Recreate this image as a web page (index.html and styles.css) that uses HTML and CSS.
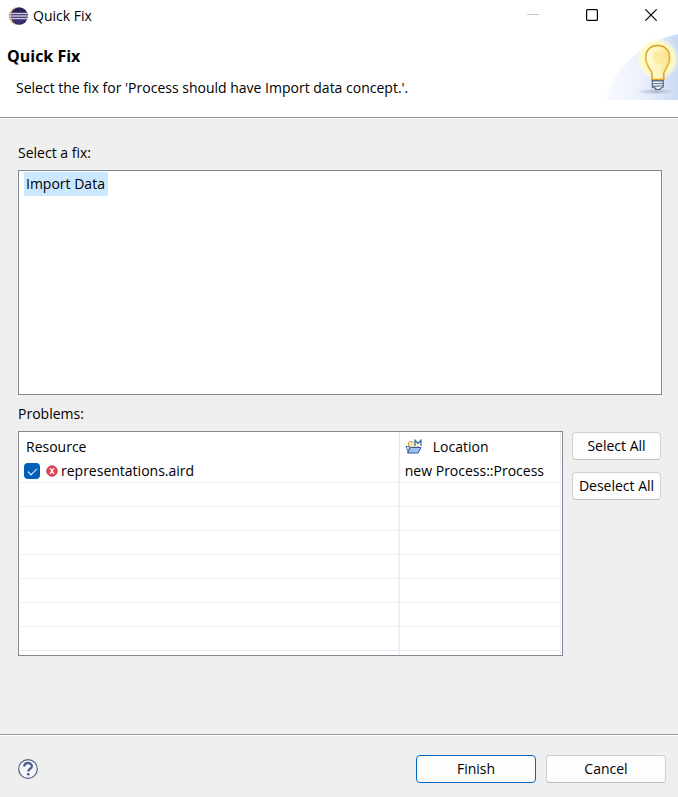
FILE: index.html
```html
<!DOCTYPE html>
<html lang="en">
<head>
<meta charset="utf-8">
<title>Quick Fix</title>
<link rel="stylesheet" href="styles.css">
</head>
<body>
<div class="dialog">
  <header class="banner">
    <div class="titlebar">
      <svg class="app-icon" width="20" height="20" viewBox="0 0 20 20" aria-hidden="true">
        <circle cx="9.800" cy="10" r="9" fill="#f7a04b"/>
        <circle cx="10.900" cy="10" r="8.900" fill="#fff"/>
        <circle cx="11.200" cy="10" r="8.700" fill="#2c2255"/>
        <path d="M3.500 13h15.500a8.700 8.700 0 0 1-15.500 0z" fill="#3b2f78"/>
        <path d="M2.400 7.500h17.200M2.200 10h17.600M2.400 12.500h17.200" stroke="#c9c3dc" stroke-width="1.500"/>
      </svg>
      <span class="titlebar-text">Quick Fix</span>
      <div class="window-buttons">
        <button class="window-button" aria-label="Minimize" disabled><svg width="12" height="12" viewBox="0 0 12 12"><path d="M0 5.500h12" stroke="#c4c4c4"/></svg></button>
        <button class="window-button" aria-label="Maximize"><svg width="12" height="12" viewBox="0 0 12 12"><rect x=".6" y=".6" width="10.800" height="10.800" rx="1" fill="none" stroke="#000" stroke-width="1.200"/></svg></button>
        <button class="window-button" aria-label="Close"><svg width="12" height="12" viewBox="0 0 12 12"><path d="M.3.300l11.400 11.400M11.700.300L.3 11.700" stroke="#000" stroke-width="1.200"/></svg></button>
      </div>
    </div>
    <div class="banner-row">
      <div class="banner-text">
        <h1>Quick Fix</h1>
        <p>Select the fix for 'Process should have Import data concept.'.</p>
      </div>
      <svg class="banner-art" width="72" height="68" viewBox="0 0 72 68" aria-hidden="true">
        <defs>
          <linearGradient id="sweep" x1="0" x2="1"><stop offset="0" stop-color="#f8faff"/><stop offset=".5" stop-color="#ebf0fc"/><stop offset="1" stop-color="#cbdaf4"/></linearGradient>
          <radialGradient id="glow"><stop offset=".5" stop-color="#fdfbb4"/><stop offset=".78" stop-color="#fdfcc6" stop-opacity=".9"/><stop offset="1" stop-color="#fffde0" stop-opacity="0"/></radialGradient>
          <linearGradient id="glass" x1="0" x2="1"><stop offset="0" stop-color="#fffbd8"/><stop offset=".5" stop-color="#fff5c0"/><stop offset="1" stop-color="#fbdf8a"/></linearGradient>
          <linearGradient id="rim" x1="0" x2="0" y1="0" y2="1"><stop offset="0" stop-color="#d59f1c"/><stop offset=".5" stop-color="#e9b737"/><stop offset="1" stop-color="#dda01e"/></linearGradient>
          <radialGradient id="shade"><stop offset="0" stop-color="#a9aec2"/><stop offset="1" stop-color="#c9cde0" stop-opacity=".3"/></radialGradient>
        </defs>
        <path d="M0 68C4 42 34 10 72 2v66z" fill="url(#sweep)"/>
        <circle cx="51.500" cy="27" r="21.500" fill="url(#glow)"/>
        <ellipse cx="50.500" cy="59.500" rx="18" ry="2.800" fill="url(#shade)"/>
        <path d="M46 47.500V42c0-4-6.300-8-6.300-16 0-8 5-12.500 12-12.500s12 4.500 12 12.500c0 8-6 12-6 16v5.500z" fill="url(#glass)" stroke="url(#rim)" stroke-width="1.600"/>
        <path d="M47.500 20c-1 8 2 12 6 12s7-5 6-13" fill="#fbe78f" opacity=".7"/>
        <path d="M46.300 48.500h10.900v6.500l-3 1.500v1h-4.400v-1l-3.500-1.500z" fill="#eef1f5" stroke="#53637c" stroke-width="1.200"/>
        <path d="M45.800 49h11.900M46.300 51.800l11.400-.6M46.300 54.400l10.900-.6" stroke="#65768d" stroke-width="1.100"/>
      </svg>
    </div>
  </header>

  <main class="content">
    <div class="label" id="fix-label">Select a fix:</div>
    <div class="fix-list" role="listbox" aria-labelledby="fix-label">
      <div class="fix-option" role="option" aria-selected="true">Import Data</div>
    </div>

    <div class="label" id="problems-label">Problems:</div>
    <div class="problems">
      <div class="table-frame">
        <table aria-labelledby="problems-label">
          <colgroup><col class="col-resource"><col></colgroup>
          <thead>
            <tr>
              <th scope="col">Resource</th>
              <th scope="col"><span class="head-cell">
                <svg width="18" height="16" viewBox="0 0 18 16" aria-hidden="true">
                  <path d="M3.500 12V3.500l1-1h3l1 1H13V8" fill="#f8e3a5" stroke="#c79a55"/>
                  <path d="M1 7.500h3.500l-1 6z" fill="#fff" stroke="#4668a8"/>
                  <path d="M5.500 8.500H16l-3 5.500H2.500z" fill="#9cc3ef" stroke="#3155a4" stroke-linejoin="round"/>
                  <path d="M9 0h8v7H9z" fill="#fff" opacity=".8"/>
                  <path d="M10 7V1.200l3 3.300 3-3.300V7" fill="none" stroke="#34729a" stroke-width="1.300"/>
                </svg>Location</span></th>
            </tr>
          </thead>
          <tbody>
            <tr>
              <td><label class="resource-cell"><input type="checkbox" checked>
                <svg width="12" height="12" viewBox="0 0 12 12" aria-hidden="true"><circle cx="6" cy="6" r="5.300" fill="#df4655" stroke="#bd3343" stroke-width=".8"/><path d="M3.500 3.300h1.600l3.400 5.400H6.900zM7 3.300h1.700L5 8.700H3.300z" fill="#fff"/></svg>
                <span>representations.aird</span></label></td>
              <td>new Process::Process</td>
            </tr>
            <tr><td></td><td></td></tr>
            <tr><td></td><td></td></tr>
            <tr><td></td><td></td></tr>
            <tr><td></td><td></td></tr>
            <tr><td></td><td></td></tr>
            <tr><td></td><td></td></tr>
            <tr><td></td><td></td></tr>
            <tr class="tail"><td></td><td></td></tr>
          </tbody>
        </table>
      </div>
      <div class="side-buttons">
        <button class="button">Select All</button>
        <button class="button">Deselect All</button>
      </div>
    </div>
  </main>

  <footer class="footer">
    <button class="help" aria-label="Help">
      <svg width="20" height="20" viewBox="0 0 20 20"><circle cx="10" cy="10" r="9.300" fill="#f5f6fa" stroke="#53648b" stroke-width="1.200"/><path d="M6.300 7.500C6.300 5 8 4 10 4s3.900 1.200 3.900 3.200c0 2.600-3.600 2.600-3.600 5.300" fill="none" stroke="#4d6089" stroke-width="2.300"/><rect x="9" y="14" width="2.600" height="2.600" rx="1" fill="#4d6089"/></svg>
    </button>
    <button class="button action primary">Finish</button>
    <button class="button action">Cancel</button>
  </footer>
</div>
</body>
</html>
```
FILE: styles.css
```css
* {
  box-sizing: border-box;
}

body {
  margin: 0;
  background: #efefef;
  color: #000;
  font: 14px/20px "Open Sans", "Noto Sans", sans-serif;
}

button {
  font: inherit;
  color: inherit;
}

svg {
  display: block;
  flex: none;
}

.dialog {
  display: flex;
  flex-direction: column;
  min-height: 100vh;
}

.banner {
  background: #fff;
  border-bottom: 1px solid #999;
  height: 118px;
}

.titlebar {
  display: flex;
  align-items: center;
  height: 32px;
  padding-left: 8px;
}

.app-icon {
  margin-right: 5px;
}

.window-buttons {
  display: flex;
  align-self: flex-start;
  margin-left: auto;
}

.window-button {
  display: flex;
  align-items: center;
  justify-content: center;
  width: 59px;
  height: 30px;
  padding: 0 0 0 4px;
  border: 0;
  background: none;
}

.banner-row {
  display: flex;
  justify-content: space-between;
}

.banner-text {
  padding: 14px 0 0 7px;
}

.banner-text h1 {
  margin: 0;
  font-size: 16px;
  line-height: 20px;
}

.banner-text p {
  margin: 12px 0 0 9px;
}

.content {
  flex: 1;
  padding: 24px 16px 0 18px;
  border-top: 1px solid #fff;
}

.label {
  height: 27px;
}

.fix-list {
  height: 225px;
  margin-bottom: 9px;
  padding: 1px 5px;
  background: #fff;
  border: 1px solid #828790;
}

.fix-option {
  width: fit-content;
  padding: 2px 3px 2px 2px;
  border-radius: 2px;
  background: #cce8ff;
}

.problems {
  display: flex;
  gap: 9px;
}

.table-frame {
  flex: 1;
  height: 225px;
  padding: 0 1px;
  background: #fff;
  border: 1px solid #828790;
}

table {
  width: 100%;
  table-layout: fixed;
  border-collapse: separate;
  border-spacing: 0;
}

.col-resource {
  width: 70.2%;
}

th,
td {
  height: 24px;
  padding: 0 5px;
  text-align: left;
  font-weight: normal;
  border-right: 1px solid #e9f0fc;
  border-bottom: 1px solid #efefef;
}

th {
  height: 27px;
  padding-top: 3px;
  border-right-color: #e5e5e5;
  border-bottom: 0;
}

th:first-child {
  padding-left: 6px;
}

td:first-child {
  padding-left: 4px;
  border-right: 2px solid #e9f0fc;
}

.tail td {
  height: 3px;
  border-bottom: 0;
}

.head-cell {
  display: flex;
  align-items: center;
  gap: 10px;
}

.resource-cell {
  display: flex;
  align-items: center;
}

.resource-cell input {
  appearance: none;
  width: 16px;
  height: 16px;
  margin: 0 6px 0 0;
  border-radius: 4px;
  background: #005fb8;
}

.resource-cell input::after {
  content: "";
  display: block;
  width: 8px;
  height: 4px;
  margin: 5px 4px;
  border: solid #fff;
  border-width: 0 0 1px 1px;
  transform: rotate(-45deg);
}

.resource-cell span {
  margin-left: 3px;
}

.side-buttons {
  display: flex;
  flex-direction: column;
  gap: 12px;
  width: 90px;
  padding: 1px 1px 0 0;
}

.button {
  height: 28px;
  padding: 0;
  border: 1px solid #d0d0d0;
  border-bottom-color: #bcbcbc;
  border-radius: 4px;
  background: #fdfdfd;
  white-space: nowrap;
}

.footer {
  display: flex;
  align-items: center;
  gap: 10px;
  height: 63px;
  padding: 6px 12px 0 18px;
  border-top: 1px solid #999;
  box-shadow: inset 0 1px #fff;
}

.help {
  margin-right: auto;
  padding: 0;
  border: 0;
  background: none;
}

.action {
  width: 120px;
}

.primary {
  border-color: #0067c0;
}
```
